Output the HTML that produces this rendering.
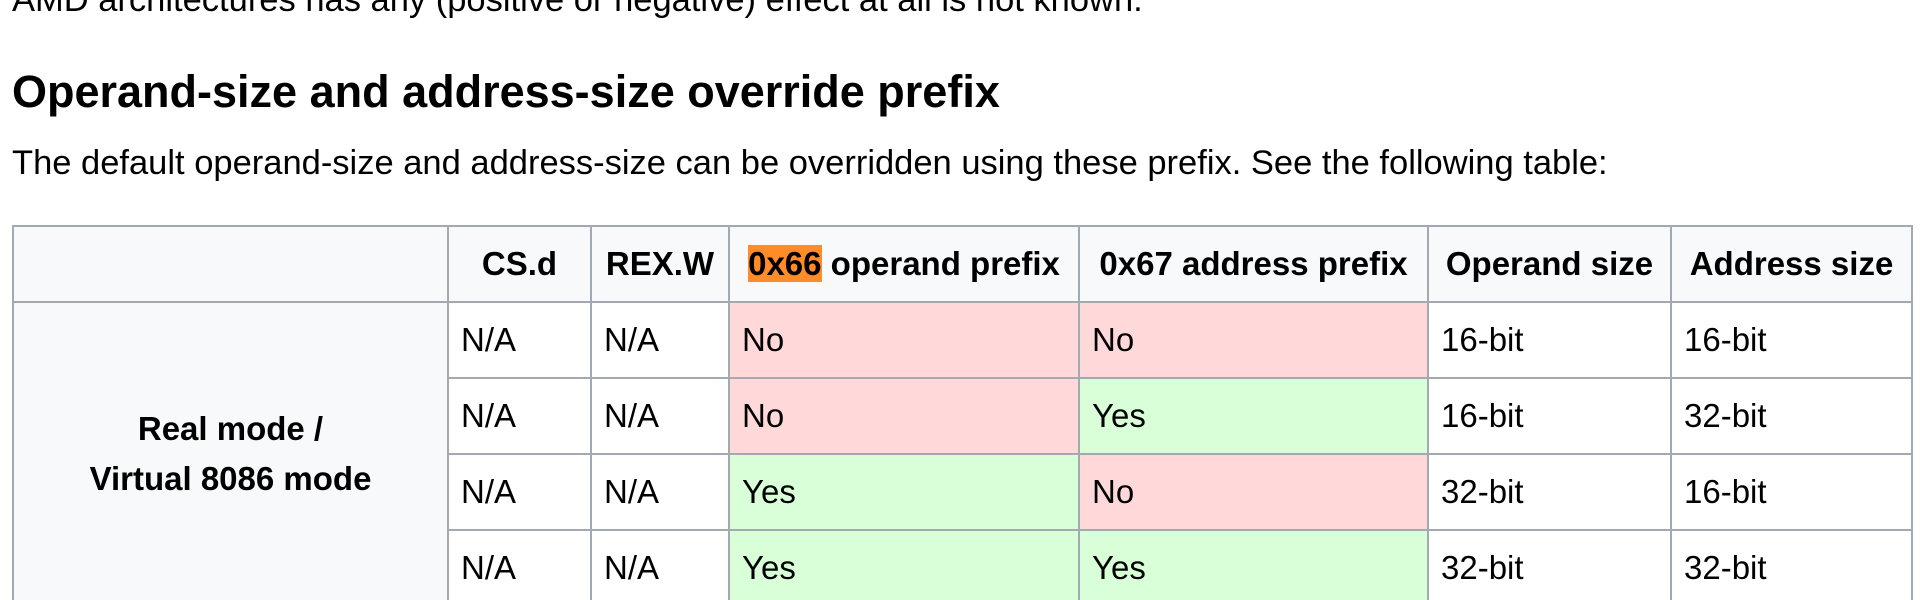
<!DOCTYPE html>
<html><head><meta charset="utf-8"><style>
html,body{margin:0;padding:0;background:#fff;width:1926px;height:600px;overflow:hidden;font-family:"Liberation Sans",Arial,sans-serif;color:#000}
#w{position:relative;width:1926px;height:600px;overflow:hidden}
.t{position:absolute;left:12px;white-space:nowrap}
table{position:absolute;left:12px;top:225px;border-collapse:collapse;table-layout:fixed;width:1899px;font-size:33px}
td,th{border:2px solid #a2a9b1;height:74px;padding:0 12px;vertical-align:middle;white-space:nowrap;overflow:hidden}
th{background:#f8f9fa;font-weight:bold;text-align:center;padding:0 6px}
.n{background:#ffd9d9}.y{background:#d9ffd9}
.hl{background:#ff8c28}
</style></head><body><div id="w">
<div class="t" style="top:-17px;font-size:34.5px;line-height:34px">AMD architectures has any (positive or negative) effect at all is not known.</div>
<div class="t" style="top:69px;font-size:45px;line-height:45px;font-weight:bold">Operand-size and address-size override prefix</div>
<div class="t" style="top:146px;font-size:34.5px;line-height:34px">The default operand-size and address-size can be overridden using these prefix. See the following table:</div>
<table>
<colgroup><col style="width:435px"><col style="width:143px"><col style="width:138px"><col style="width:350px"><col style="width:349px"><col style="width:243px"><col style="width:241px"></colgroup>
<tr><th></th><th>CS.d</th><th>REX.W</th><th><span class="hl">0x66</span> operand prefix</th><th>0x67 address prefix</th><th>Operand size</th><th>Address size</th></tr>
<tr><th rowspan="4" style="line-height:50px">Real mode /<br>Virtual 8086 mode</th><td>N/A</td><td>N/A</td><td class="n">No</td><td class="n">No</td><td>16-bit</td><td>16-bit</td></tr>
<tr><td>N/A</td><td>N/A</td><td class="n">No</td><td class="y">Yes</td><td>16-bit</td><td>32-bit</td></tr>
<tr><td>N/A</td><td>N/A</td><td class="y">Yes</td><td class="n">No</td><td>32-bit</td><td>16-bit</td></tr>
<tr><td>N/A</td><td>N/A</td><td class="y">Yes</td><td class="y">Yes</td><td>32-bit</td><td>32-bit</td></tr>
</table>
</div></body></html>
